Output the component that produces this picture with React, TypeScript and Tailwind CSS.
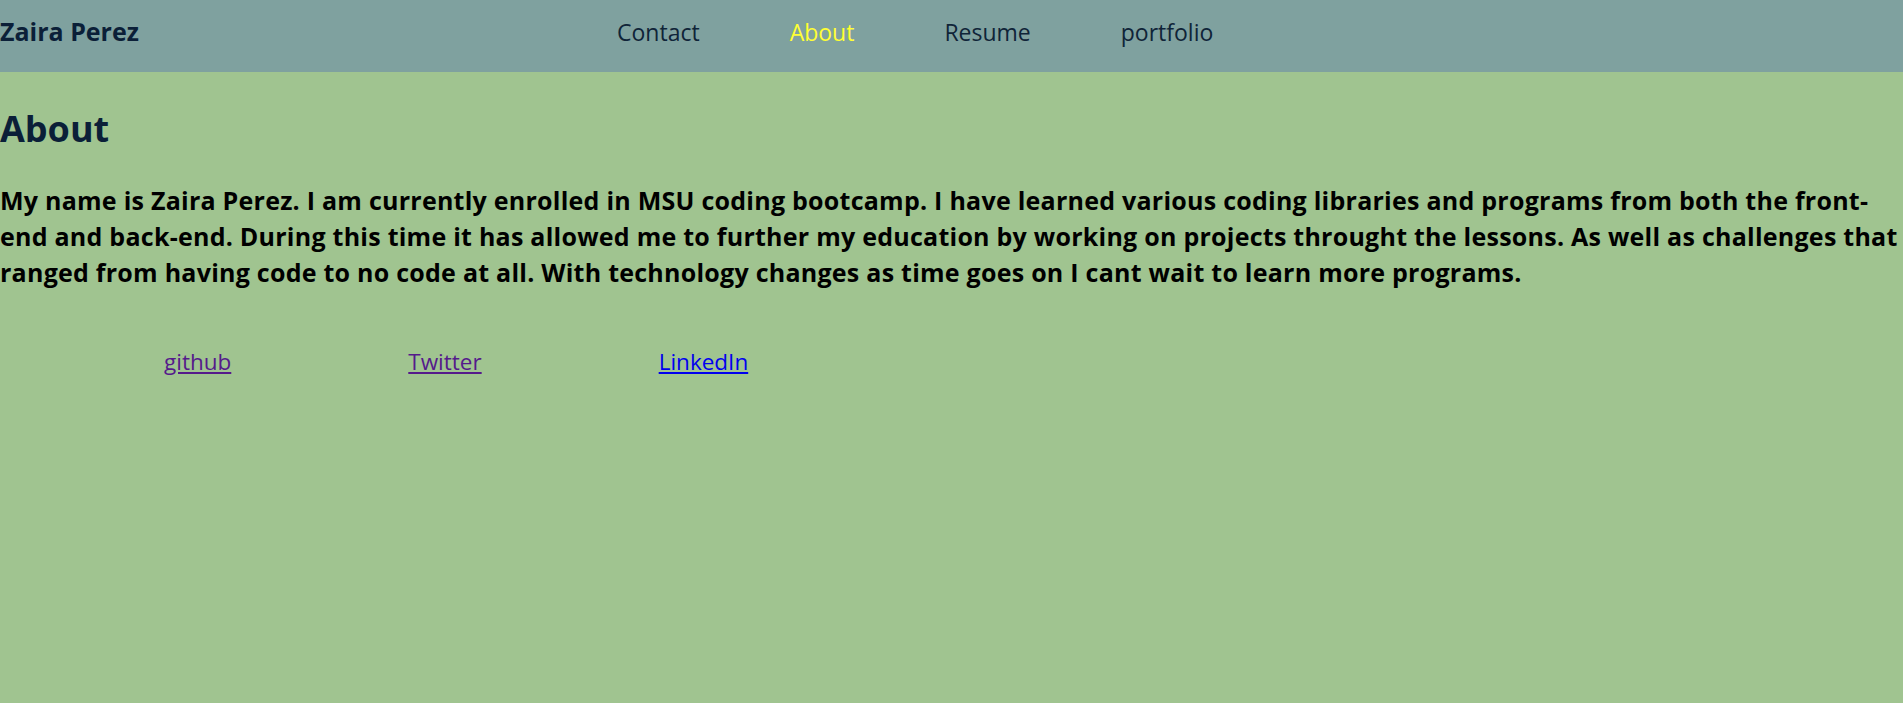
export default function App() {
  const navItems = ["Contact", "About", "Resume", "portfolio"];

  return (
    <div className="min-h-[703px] bg-[#a0c490] font-['Open_Sans',sans-serif]">
      <header className="flex h-[72px] items-center bg-[#7fa19f] pb-[8px]">
        <div className="w-[617px] text-[25px] font-bold text-[#0b1f38]">Zaira Perez</div>
        <nav className="flex gap-[90px] text-[23px]">
          {navItems.map((item) => (
            <a
              key={item}
              href="#"
              className={item === "About" ? "text-[#ffff33]" : "text-[#0f2438]"}
            >
              {item}
            </a>
          ))}
        </nav>
      </header>

      <main>
        <h1 className="mt-[33px] text-[36px] font-bold leading-[48px] text-[#0b1f38]">About</h1>
        <p className="mt-[29px] text-[25px] font-bold leading-[36px] tracking-[0.25px] text-black">
          My name is Zaira Perez. I am currently enrolled in MSU coding bootcamp. I have learned various coding
          libraries and programs from both the front-end and back-end. During this time it has allowed me to further
          my education by working on projects throught the lessons. As well as challenges that ranged from having
          code to no code at all. With technology changes as time goes on I cant wait to learn more programs.
        </p>
        <div className="mt-[54px] flex gap-[177px] pl-[164px] text-[22.5px] leading-[36px]">
          <a href="#" className="text-[#551a8b] underline">github</a>
          <a href="#" className="text-[#551a8b] underline">Twitter</a>
          <a href="#" className="text-[#0000ee] underline">LinkedIn</a>
        </div>
      </main>
    </div>
  );
}
